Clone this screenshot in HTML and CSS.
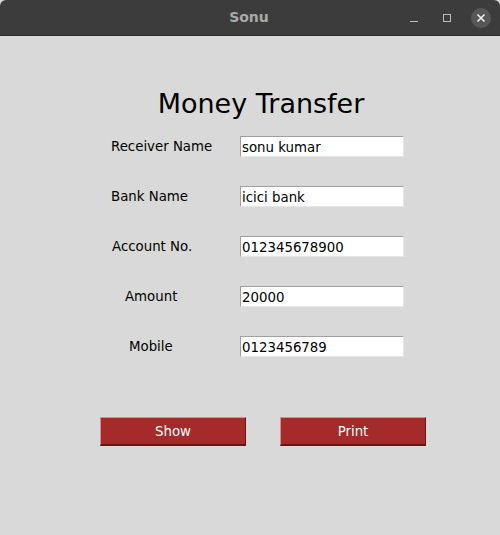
FILE: index.html
```html
<!DOCTYPE html>
<html>
<head>
<meta charset="utf-8">
<link rel="stylesheet" href="styles.css">
</head>
<body>
<div class="window">
  <header class="titlebar">
    <span class="wtitle">Sonu</span>
    <div class="controls">
      <span class="ctl min"><svg width="10" height="10" viewBox="0 0 10 10"><line x1="1" y1="8.5" x2="9" y2="8.5" stroke="#bdbdbd" stroke-width="1"/></svg></span>
      <span class="ctl max"><svg width="10" height="10" viewBox="0 0 10 10"><rect x="1.5" y="1.5" width="7" height="7" fill="none" stroke="#bdbdbd" stroke-width="1"/></svg></span>
      <span class="ctl close"><svg width="10" height="10" viewBox="0 0 10 10"><path d="M1.5 1.5 L8.5 8.5 M8.5 1.5 L1.5 8.5" stroke="#f0f0f0" stroke-width="1.6"/></svg></span>
    </div>
  </header>
  <main class="content">
    <h1 class="heading">Money Transfer</h1>
    <div class="form">
      <div class="row"><span class="label l-recv">Receiver Name</span><div class="entry">sonu kumar</div></div>
      <div class="row"><span class="label l-bank">Bank Name</span><div class="entry">icici bank</div></div>
      <div class="row"><span class="label l-acct">Account No.</span><div class="entry">012345678900</div></div>
      <div class="row"><span class="label l-amt">Amount</span><div class="entry">20000</div></div>
      <div class="row"><span class="label l-mob">Mobile</span><div class="entry">0123456789</div></div>
    </div>
    <div class="buttons">
      <button class="btn">Show</button>
      <button class="btn">Print</button>
    </div>
  </main>
</div>
</body>
</html>
```
FILE: styles.css
```css
* { box-sizing: border-box; }
html, body { margin: 0; padding: 0; }
body { width: 500px; height: 535px; background: #d9d9d9; font-family: "DejaVu Sans", sans-serif; overflow: hidden; }
.window { width: 500px; height: 535px; background: #d9d9d9; }
.titlebar {
  height: 36px; background: #3c3c3c; border-bottom: 1px solid #2a2a2a;
  display: flex; align-items: center; justify-content: center; position: relative;
  border-radius: 6px 6px 0 0;
}
.wtitle { color: #a9a9a9; font-weight: bold; font-size: 14px; font-family: "DejaVu Sans", sans-serif; margin-left: -2px; margin-top: -1px; }
.controls { position: absolute; right: 9px; top: 8px; display: flex; align-items: center; gap: 10px; }
.ctl { width: 20px; height: 20px; display: flex; align-items: center; justify-content: center; border-radius: 50%; }
.min { margin-right: 3px; }
.max { margin-right: 4px; }
.close { background: #575757; }
.content { display: flex; flex-direction: column; }
.heading {
  margin: 50px 0 0 0; font-weight: normal; font-size: 27px; color: #000;
  text-align: center; line-height: 36px; padding-left: 22px;
}
.form { display: flex; flex-direction: column; gap: 29px; margin-top: 14px; }
.row { display: flex; align-items: center; height: 21px; }
.label { width: 129px; margin-left: 111px; font-size: 13.33px; color: #000; }
.l-acct { padding-left: 1px; }
.l-amt { padding-left: 14px; }
.l-mob { padding-left: 18px; }
.entry {
  width: 164px; height: 21px; background: #fff; font-size: 13.33px; color: #000;
  border-top: 1px solid #a0a0a0; border-left: 1px solid #a0a0a0;
  border-right: 1px solid #e6e6e6; border-bottom: 1px solid #e6e6e6;
  padding-left: 1px; padding-top: 1px; line-height: 19px;
}
.buttons { display: flex; gap: 34px; margin-left: 100px; margin-top: 60px; }
.btn {
  width: 146px; height: 29px; background: #a52a2a; color: #fff;
  font-family: "DejaVu Sans", sans-serif; font-size: 13.33px; padding: 0;
  border-top: 1px solid #d98c8c; border-left: 1px solid #d98c8c;
  border-right: 1px solid #6b1414; border-bottom: 2px solid #6b1414;
}
```
